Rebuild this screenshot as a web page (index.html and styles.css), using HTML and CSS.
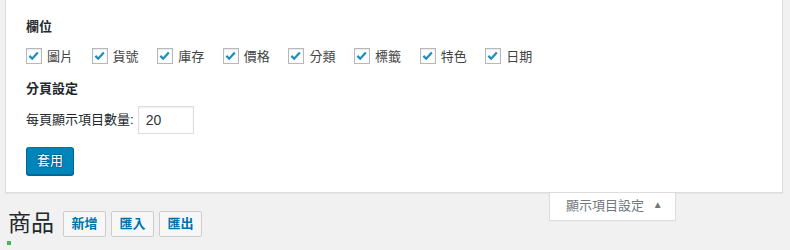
FILE: index.html
```html
<!DOCTYPE html>
<html lang="zh-Hant">
<head>
<meta charset="utf-8">
<title>商品</title>
<link rel="stylesheet" href="styles.css">
</head>
<body>
<div class="screen-meta">
  <h5 class="meta-title">欄位</h5>
  <div class="prefs">
    <label class="pref"><span class="cb"><svg viewBox="0 0 16 16" width="16" height="16"><path d="M3.6 7.9 L6.6 10.9 L12.6 4.3" fill="none" stroke="#1e8cbe" stroke-width="2.4"/></svg></span>圖片</label>
    <label class="pref"><span class="cb"><svg viewBox="0 0 16 16" width="16" height="16"><path d="M3.6 7.9 L6.6 10.9 L12.6 4.3" fill="none" stroke="#1e8cbe" stroke-width="2.4"/></svg></span>貨號</label>
    <label class="pref"><span class="cb"><svg viewBox="0 0 16 16" width="16" height="16"><path d="M3.6 7.9 L6.6 10.9 L12.6 4.3" fill="none" stroke="#1e8cbe" stroke-width="2.4"/></svg></span>庫存</label>
    <label class="pref"><span class="cb"><svg viewBox="0 0 16 16" width="16" height="16"><path d="M3.6 7.9 L6.6 10.9 L12.6 4.3" fill="none" stroke="#1e8cbe" stroke-width="2.4"/></svg></span>價格</label>
    <label class="pref"><span class="cb"><svg viewBox="0 0 16 16" width="16" height="16"><path d="M3.6 7.9 L6.6 10.9 L12.6 4.3" fill="none" stroke="#1e8cbe" stroke-width="2.4"/></svg></span>分類</label>
    <label class="pref"><span class="cb"><svg viewBox="0 0 16 16" width="16" height="16"><path d="M3.6 7.9 L6.6 10.9 L12.6 4.3" fill="none" stroke="#1e8cbe" stroke-width="2.4"/></svg></span>標籤</label>
    <label class="pref"><span class="cb"><svg viewBox="0 0 16 16" width="16" height="16"><path d="M3.6 7.9 L6.6 10.9 L12.6 4.3" fill="none" stroke="#1e8cbe" stroke-width="2.4"/></svg></span>特色</label>
    <label class="pref"><span class="cb"><svg viewBox="0 0 16 16" width="16" height="16"><path d="M3.6 7.9 L6.6 10.9 L12.6 4.3" fill="none" stroke="#1e8cbe" stroke-width="2.4"/></svg></span>日期</label>
  </div>
  <h5 class="meta-title second">分頁設定</h5>
  <div class="per-page">
    <label for="pp">每頁顯示項目數量:</label>
    <input id="pp" class="num" type="text" value="20">
  </div>
  <div class="apply-row">
    <button class="btn-primary" type="button">套用</button>
  </div>
</div>

<div class="meta-links">
  <button class="meta-tab" type="button">顯示項目設定 <span class="arrow">▲</span></button>
</div>

<div class="wrap">
  <div class="title-row">
    <h1 class="page-title">商品</h1>
    <a class="title-action" href="#">新增</a>
    <a class="title-action" href="#">匯入</a>
    <a class="title-action" href="#">匯出</a>
  </div>
  <div class="notice-edge"></div>
</div>
</body>
</html>
```

FILE: styles.css
```css
html, body {
  margin: 0;
  padding: 0;
}

body {
  background: #f1f1f1;
  color: #444;
  font-family: "Liberation Sans", "Noto Sans CJK TC", sans-serif;
  font-size: 13px;
  line-height: 1.4;
  width: 790px;
  height: 250px;
  overflow: hidden;
}

.screen-meta {
  margin: 0 7px 0 5px;
  background: #fff;
  border: 1px solid #dcdcdc;
  border-top: none;
  box-shadow: 0 1px 1px rgba(0, 0, 0, 0.04);
  padding: 18px 20px 17px 20px;
  height: 157px;
  box-sizing: content-box;
}

.meta-title {
  margin: 0;
  font-size: 13px;
  font-weight: 600;
  line-height: 18px;
  height: 18px;
  color: #23282d;
}

.meta-title.second {
  margin-top: 8px;
}

.prefs {
  display: flex;
  align-items: center;
  height: 30px;
  margin-top: 6px;
}

.pref {
  display: flex;
  align-items: center;
  white-space: nowrap;
  color: #444;
  line-height: 30px;
  margin-right: 18.6px;
}

.cb {
  display: inline-flex;
  width: 16px;
  height: 16px;
  box-sizing: border-box;
  border: 1px solid #b4b9be;
  background: #fff;
  box-shadow: inset 0 1px 2px rgba(0, 0, 0, 0.1);
  margin-right: 5px;
  flex: none;
  position: relative;
  top: -1px;
}

.cb svg {
  display: block;
  margin: -1px 0 0 -1px;
}

.per-page {
  display: flex;
  align-items: center;
  margin-top: 8px;
  height: 28px;
  color: #23282d;
}

.per-page label {
  margin-right: 4px;
}

.num {
  width: 56px;
  height: 28px;
  box-sizing: border-box;
  border: 1px solid #ddd;
  box-shadow: inset 0 1px 2px rgba(0, 0, 0, 0.07);
  padding: 0 7px;
  font-family: "Liberation Sans", sans-serif;
  font-size: 14px;
  color: #32373c;
  background: #fff;
  margin: 0;
}

.apply-row {
  margin-top: 13px;
  height: 28px;
  display: flex;
}

.btn-primary {
  height: 28px;
  padding: 0 10px;
  background: #0085ba;
  border: 1px solid #0073aa;
  border-color: #0073aa #006799 #006799;
  box-shadow: 0 1px 0 #006799;
  border-radius: 3px;
  color: #fff;
  text-shadow: 0 -1px 1px #006799, 1px 0 1px #006799, 0 1px 1px #006799, -1px 0 1px #006799;
  font-family: "Liberation Sans", "Noto Sans CJK TC", sans-serif;
  font-size: 13px;
  line-height: 26px;
  width: 48px;
  cursor: pointer;
}

.meta-links {
  float: right;
  margin-right: 114px;
}

.meta-tab {
  display: block;
  width: 127px;
  height: 28px;
  background: #fff;
  border: 1px solid #ddd;
  border-top: none;
  box-shadow: 0 1px 1px -1px rgba(0, 0, 0, 0.1);
  color: #72777c;
  font-family: "Liberation Sans", "Noto Sans CJK TC", sans-serif;
  font-size: 13px;
  line-height: 26px;
  padding: 0 0 0 16px;
  text-align: left;
  box-sizing: border-box;
}

.arrow {
  font-size: 10px;
  margin-left: 5px;
  color: #72777c;
  position: relative;
  top: -2px;
}

.wrap {
  margin-left: 8px;
  padding-top: 15px;
}

.title-row {
  display: flex;
  align-items: center;
  height: 30px;
}

.page-title {
  margin: 0 9px 0 0;
  font-size: 23px;
  font-weight: 400;
  line-height: 29px;
  color: #23282d;
}

.title-action {
  display: inline-block;
  width: 43px;
  height: 26px;
  box-sizing: border-box;
  padding: 0;
  text-align: center;
  margin-right: 5px;
  border: 1px solid #ccc;
  border-radius: 2px;
  background: #f7f7f7;
  color: #0073aa;
  font-weight: 600;
  font-size: 13px;
  line-height: 24px;
  text-decoration: none;
  position: relative;
  top: 1px;
}

.notice-edge {
  margin-top: 3px;
  width: 4px;
  height: 4px;
  margin-left: -1px;
  background: #46b450;
}
```
